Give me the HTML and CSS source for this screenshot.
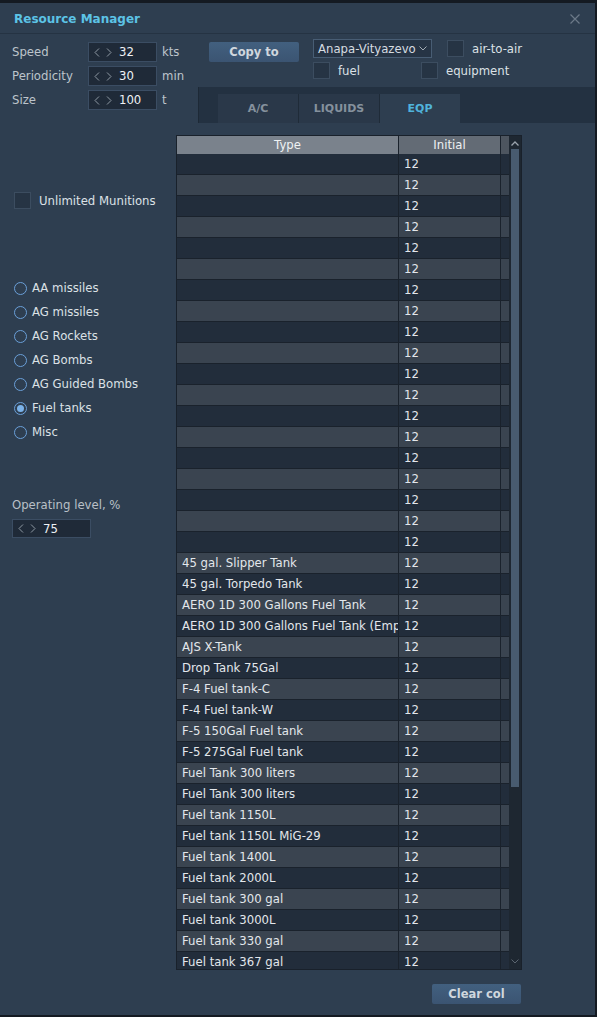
FILE: index.html
```html
<!DOCTYPE html>
<html lang="en">
<head>
<meta charset="UTF-8">
<meta name="viewport" content="width=device-width, initial-scale=1.0">
<title>Resource Manager</title>
<link rel="stylesheet" href="styles.css">
</head>
<body>

<div class="window">
    <!-- Title bar -->
    <div class="titlebar">
        <span class="title">Resource Manager</span>
        <svg class="close" width="10" height="10" viewBox="0 0 10 10"><path d="M0.5 0.5L9.5 9.5M9.5 0.5L0.5 9.5" stroke="#6c7988" stroke-width="1.2"/></svg>
    </div>

    <!-- Top: parameters, copy, filters, tabs -->
    <div class="top">
        <div class="params">
            <div class="param">
                <span class="plabel">Speed</span>
                <div class="spin"><span class="arrows"><svg width="20" height="9" viewBox="0 0 20 9"><path d="M5 0.5L1 4.5L5 8.5M13 0.5L17 4.5L13 8.5" fill="none" stroke="#8e98a2" stroke-width="1"/></svg></span><span class="val">32</span></div>
                <span class="unit">kts</span>
            </div>
            <div class="param">
                <span class="plabel">Periodicity</span>
                <div class="spin"><span class="arrows"><svg width="20" height="9" viewBox="0 0 20 9"><path d="M5 0.5L1 4.5L5 8.5M13 0.5L17 4.5L13 8.5" fill="none" stroke="#8e98a2" stroke-width="1"/></svg></span><span class="val">30</span></div>
                <span class="unit">min</span>
            </div>
            <div class="param">
                <span class="plabel">Size</span>
                <div class="spin"><span class="arrows"><svg width="20" height="9" viewBox="0 0 20 9"><path d="M5 0.5L1 4.5L5 8.5M13 0.5L17 4.5L13 8.5" fill="none" stroke="#8e98a2" stroke-width="1"/></svg></span><span class="val">100</span></div>
                <span class="unit">t</span>
            </div>
        </div>

        <div class="right">
            <div class="controls">
                <button class="btn copy">Copy to</button>
                <div class="filters">
                    <div class="frow">
                        <div class="select">
                            <span>Anapa-Vityazevo</span>
                            <svg width="8" height="5" viewBox="0 0 8 5"><path d="M0.5 0.5L4 4L7.5 0.5" fill="none" stroke="#a3acb5" stroke-width="1"/></svg>
                        </div>
                        <span class="box air"></span><span class="clabel">air-to-air</span>
                    </div>
                    <div class="frow second">
                        <span class="box"></span><span class="clabel fuel">fuel</span>
                        <span class="box"></span><span class="clabel">equipment</span>
                    </div>
                </div>
            </div>
            <div class="tabstrip">
                <div class="tab">A/C</div>
                <div class="tab">LIQUIDS</div>
                <div class="tab active">EQP</div>
            </div>
        </div>
    </div>

    <!-- Lower: categories and table -->
    <div class="lower">
        <div class="side">
            <div class="check">
                <span class="box"></span><span class="clabel">Unlimited Munitions</span>
            </div>
            <div class="radios">
                <div class="radio"><span class="dot"></span>AA missiles</div>
                <div class="radio"><span class="dot"></span>AG missiles</div>
                <div class="radio"><span class="dot"></span>AG Rockets</div>
                <div class="radio"><span class="dot"></span>AG Bombs</div>
                <div class="radio"><span class="dot"></span>AG Guided Bombs</div>
                <div class="radio"><span class="dot on"></span>Fuel tanks</div>
                <div class="radio"><span class="dot"></span>Misc</div>
            </div>
            <div class="oplabel">Operating level, %</div>
            <div class="spin small"><span class="arrows"><svg width="20" height="9" viewBox="0 0 20 9"><path d="M5 0.5L1 4.5L5 8.5M13 0.5L17 4.5L13 8.5" fill="none" stroke="#8e98a2" stroke-width="1"/></svg></span><span class="val">75</span></div>
        </div>

        <div class="tablecol">
            <div class="frame">
                <div class="grid">
                    <div class="head">
                        <div class="c-type">Type</div>
                        <div class="c-init">Initial</div>
                        <div class="c-pad"></div>
                    </div>
                    <div class="body" id="rows"></div>
                </div>
                <div class="scroll">
                    <svg class="up" width="8" height="5" viewBox="0 0 8 5"><path d="M0.5 4.5L4 1L7.5 4.5" fill="none" stroke="#9ba4ad" stroke-width="1.3"/></svg>
                    <div class="thumb"></div>
                    <svg class="down" width="8" height="5" viewBox="0 0 8 5"><path d="M0.5 0.5L4 4L7.5 0.5" fill="none" stroke="#5b6570" stroke-width="1"/></svg>
                </div>
            </div>
            <button class="btn clear">Clear col</button>
        </div>
    </div>
</div>

<script>
    // Fuel tank list, first rows have no name
    const names = [
        "45 gal. Slipper Tank", "45 gal. Torpedo Tank", "AERO 1D 300 Gallons Fuel Tank",
        "AERO 1D 300 Gallons Fuel Tank (Empty)", "AJS X-Tank", "Drop Tank 75Gal",
        "F-4 Fuel tank-C", "F-4 Fuel tank-W", "F-5 150Gal Fuel tank", "F-5 275Gal Fuel tank",
        "Fuel Tank 300 liters", "Fuel Tank 300 liters", "Fuel tank 1150L",
        "Fuel tank 1150L MiG-29", "Fuel tank 1400L", "Fuel tank 2000L",
        "Fuel tank 300 gal", "Fuel tank 3000L", "Fuel tank 330 gal", "Fuel tank 367 gal"
    ];
    const rows = [];
    for (let i = 0; i < 19; i++) rows.push("");
    names.forEach(n => rows.push(n));

    const body = document.getElementById("rows");
    rows.forEach((name, i) => {
        body.innerHTML += `
            <div class="row ${i % 2 ? 'light' : ''}">
                <div class="c-type">${name}</div>
                <div class="c-init">12</div>
                <div class="c-pad"></div>
            </div>`;
    });
</script>

</body>
</html>
```

FILE: styles.css
```css
body {
    margin: 0;
    background: #141a22;
    font-family: "DejaVu Sans", sans-serif;
    font-size: 11.7px;
    color: #dde2e7;
}
.window {
    width: 595px;
    height: 1012px;
    margin-top: 3px;
    background: #2e3e50;
    display: flex;
    flex-direction: column;
}

/* title */
.titlebar {
    height: 28px;
    border-bottom: 1px solid #253343;
    display: flex;
    align-items: center;
    justify-content: space-between;
    padding: 2px 15px 0 14px;
}
.title {
    font-weight: bold;
    font-size: 12px;
    color: #5cc3e6;
}

/* top area */
.top {
    display: flex;
    height: 89px;
}
.params {
    width: 186px;
    padding: 8px 0 0 12px;
}
.param {
    display: flex;
    align-items: center;
    height: 20px;
    margin-bottom: 4px;
}
.plabel {
    width: 76px;
    color: #bdc4cb;
}
.unit {
    margin-left: 5px;
    color: #bdc4cb;
}
.spin {
    width: 69px;
    height: 20px;
    box-sizing: border-box;
    background: #1f2a38;
    border: 1px solid #3b4d63;
    display: flex;
    align-items: center;
    padding-left: 5px;
}
.arrows {
    display: flex;
    width: 25px;
}
.val {
    color: #eef1f4;
}
.spin.small {
    width: 79px;
    height: 19px;
    margin-left: -2px;
}

.right {
    flex: 1;
    display: flex;
    flex-direction: column;
}
.controls {
    height: 53px;
    display: flex;
    align-items: flex-start;
}
.btn {
    font-family: "DejaVu Sans", sans-serif;
    font-size: 11.5px;
    font-weight: bold;
    color: #d0d7de;
    background: linear-gradient(#42607f, #3b5472);
    border: none;
    border-radius: 2px;
    padding: 0;
    cursor: pointer;
}
.copy {
    width: 90px;
    height: 20px;
    margin: 8px 0 0 11px;
}
.filters {
    margin: 5px 0 0 14px;
}
.frow {
    display: flex;
    align-items: center;
    height: 19px;
}
.frow.second {
    margin-top: 3px;
}
.select {
    width: 119px;
    height: 19px;
    box-sizing: border-box;
    border: 1px solid #485d74;
    background: #263445;
    display: flex;
    align-items: center;
    justify-content: space-between;
    padding: 0 4px 0 4px;
    color: #d6dce1;
    white-space: nowrap;
}
.box {
    width: 17px;
    height: 17px;
    box-sizing: border-box;
    background: #263444;
    border: 1px solid #3c4d60;
    display: inline-block;
}
.box.air {
    margin-left: 15px;
}
.clabel {
    margin-left: 8px;
    color: #dce1e6;
}
.clabel.fuel {
    width: 83px;
}

.tabstrip {
    height: 36px;
    box-sizing: border-box;
    background: #233141;
    border-left: 1px solid #1d2936;
    padding: 7px 0 0 19px;
    display: flex;
}
.tab {
    width: 80px;
    border-right: 1px solid #1f2b38;
    background: #2a3849;
    color: #85919d;
    font-weight: bold;
    font-size: 11px;
    display: flex;
    align-items: center;
    justify-content: center;
}
.tab.active {
    background: #2e3e50;
    color: #50b3dc;
    border-right: none;
}

/* lower area */
.lower {
    flex: 1;
    display: flex;
}
.side {
    width: 162px;
    padding-left: 14px;
}
.check {
    display: flex;
    align-items: center;
    margin-top: 69px;
}
.radios {
    margin-top: 67px;
}
.radio {
    height: 24px;
    display: flex;
    align-items: center;
    color: #dce1e6;
}
.dot {
    width: 13px;
    height: 13px;
    box-sizing: border-box;
    border: 1px solid #6a9fd8;
    border-radius: 50%;
    margin-right: 5px;
    display: flex;
    align-items: center;
    justify-content: center;
}
.dot.on::after {
    content: "";
    width: 7px;
    height: 7px;
    border-radius: 50%;
    background: #7bb3ea;
}
.oplabel {
    margin: 54px 0 0 -2px;
    line-height: 14px;
    color: #b9c0c7;
}
.oplabel + .spin {
    margin-top: 7px;
}

.tablecol {
    display: flex;
    flex-direction: column;
    align-items: flex-end;
    padding-top: 12px;
}
.frame {
    display: flex;
    border: 1px solid #19212b;
    height: 833px;
}
.grid {
    width: 332px;
}
.head, .row {
    display: flex;
}
.head {
    height: 18px;
    line-height: 18px;
    color: #eef1f3;
    text-align: center;
}
.head .c-type { background: #7a828c; }
.head .c-init { background: #636b75; }
.head .c-pad { background: #4d555f; }
.c-type {
    width: 221px;
    border-right: 1px solid #1a222c;
    white-space: nowrap;
    overflow: hidden;
}
.c-init {
    width: 101px;
    border-right: 1px solid #1a222c;
}
.c-pad {
    width: 8px;
}
.body {
    height: 815px;
    overflow: hidden;
}
.row {
    height: 20px;
    line-height: 20px;
    border-bottom: 1px solid #1a222c;
    background: #222d3b;
    color: #e3e7eb;
}
.row.light {
    background: #3a4450;
}
.row .c-type, .row .c-init {
    box-sizing: border-box;
    padding-left: 5px;
}
.row .c-type { width: 222px; }
.row .c-init { width: 102px; }
.scroll {
    width: 12px;
    background: #1e2731;
    display: flex;
    flex-direction: column;
    align-items: center;
}
.up {
    margin: 5px 0 3px;
}
.thumb {
    width: 8px;
    height: 638px;
    background: #485b6f;
}
.down {
    margin-top: auto;
    margin-bottom: 5px;
}
.clear {
    width: 89px;
    height: 20px;
    margin: 14px 1px 0 0;
}
```
